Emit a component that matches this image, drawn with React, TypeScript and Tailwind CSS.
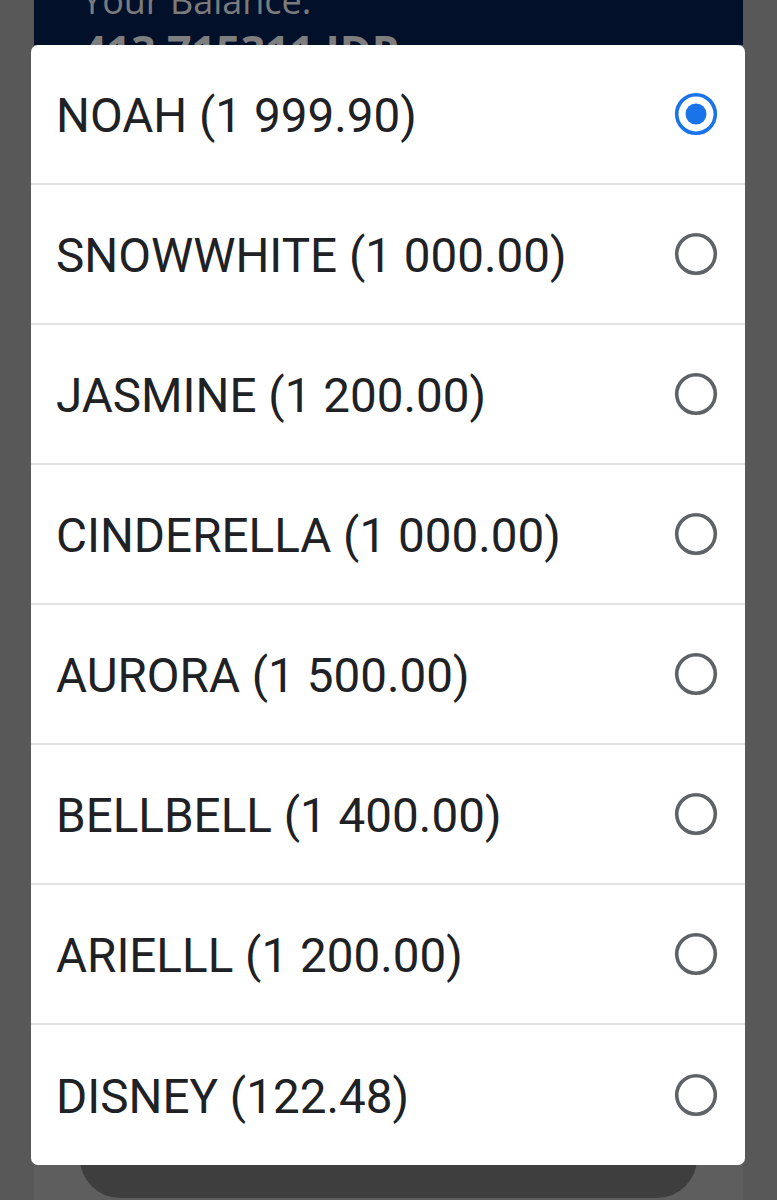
import React from "react";

const options = [
  { name: "NOAH", amount: "1 999.90" },
  { name: "SNOWWHITE", amount: "1 000.00" },
  { name: "JASMINE", amount: "1 200.00" },
  { name: "CINDERELLA", amount: "1 000.00" },
  { name: "AURORA", amount: "1 500.00" },
  { name: "BELLBELL", amount: "1 400.00" },
  { name: "ARIELLL", amount: "1 200.00" },
  { name: "DISNEY", amount: "122.48" },
];

function Radio({ checked }: { checked: boolean }) {
  return (
    <svg width="44" height="44" viewBox="0 0 44 44" className="shrink-0">
      <circle
        cx="22"
        cy="22"
        r="19.3"
        fill="none"
        stroke={checked ? "#1a73e8" : "#5f6368"}
        strokeWidth="3.6"
      />
      {checked && <circle cx="22" cy="22" r="10.5" fill="#1a73e8" />}
    </svg>
  );
}

function App() {
  const selected = 0;

  return (
    <div className="relative h-[1200px] w-full overflow-hidden bg-[#585858] flex justify-center">
      {/* page behind the dim overlay */}
      <div className="w-[709px] h-full bg-[#5e5e5e] flex flex-col">
        <div className="h-[45px] bg-[#02102a] overflow-hidden pl-[48px] font-['Open_Sans',sans-serif]">
          <div className="mt-[-21px] text-[36px] leading-[44px] text-[#7b7b7b]">
            Your Balance:
          </div>
          <div className="mt-[4px] text-[43px] leading-[48px] font-bold text-[#7e7e7e]">
            413 715311 IDR
          </div>
        </div>
        <div className="flex-1" />
        <div className="mx-[46px] mb-[2px] h-[80px] rounded-[40px] bg-[#3e3e3e]" />
      </div>

      {/* dialog */}
      <div className="absolute left-[31px] top-[45px] w-[714px] rounded-[7px] bg-white overflow-hidden font-['Roboto',sans-serif]">
        {options.map((o, i) => (
          <div
            key={o.name}
            className={
              "h-[140px] flex items-center justify-between pl-[25px] pr-[27px] " +
              (i < options.length - 1 ? "border-b-2 border-[#e3e3e3]" : "")
            }
          >
            <span className="mt-[6px] text-[47.6px] leading-none text-[#202124]">
              {o.name} ({o.amount})
            </span>
            <Radio checked={i === selected} />
          </div>
        ))}
      </div>
    </div>
  );
}

export default App;
